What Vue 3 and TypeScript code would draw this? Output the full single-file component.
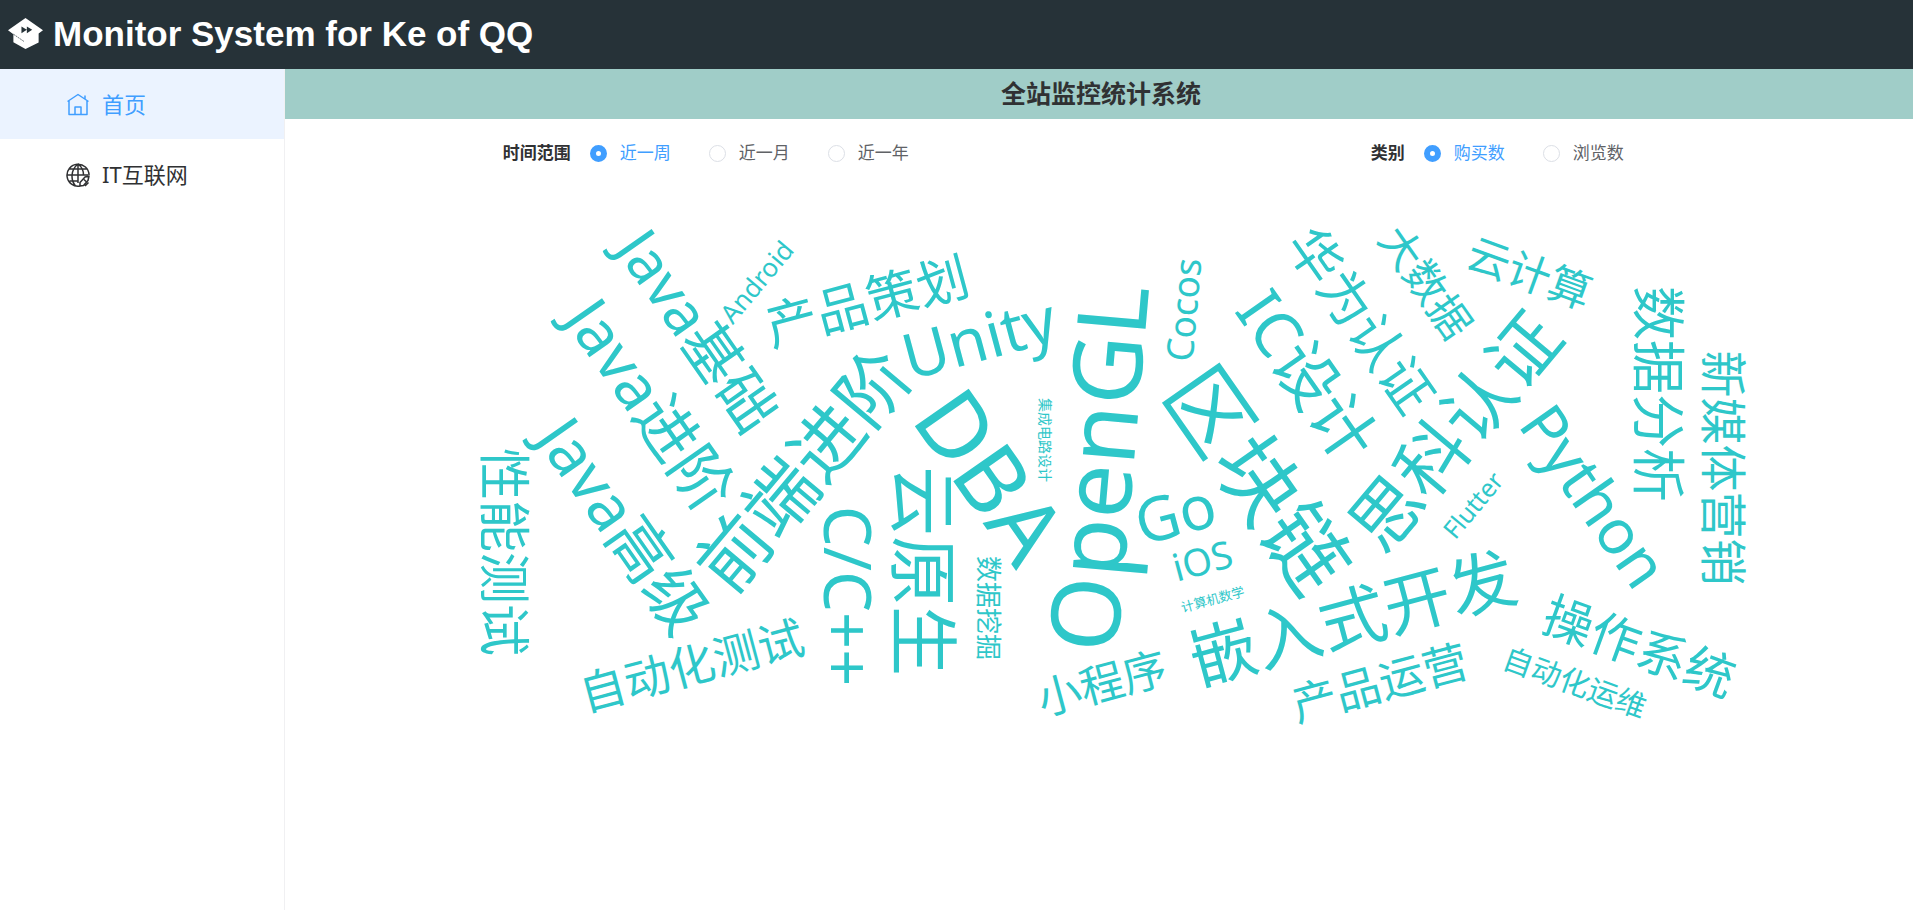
<script setup lang="ts">
import { ref } from 'vue'

interface Option {
  value: string
  label: string
}

interface Word {
  text: string
  size: number
  x: number
  y: number
  angle: number
}

const ranges: Option[] = [
  { value: 'week', label: '近一周' },
  { value: 'month', label: '近一月' },
  { value: 'year', label: '近一年' },
]

const kinds: Option[] = [
  { value: 'buy', label: '购买数' },
  { value: 'view', label: '浏览数' },
]

const range = ref('week')
const kind = ref('buy')

const words: Word[] = [
  { text: 'OpenGL', size: 96, x: 848, y: 284, angle: -85 },
  { text: 'DBA', size: 92, x: 678, y: 308, angle: 55 },
  { text: '区块链', size: 84, x: 948, y: 310, angle: 55 },
  { text: '前端进阶', size: 72, x: 539, y: 300, angle: -50 },
  { text: '思科认证', size: 71, x: 1190, y: 261, angle: -50 },
  { text: '云原生', size: 70, x: 612, y: 384, angle: 90 },
  { text: '嵌入式开发', size: 67, x: 1074, y: 455, angle: -15 },
  { text: 'C/C++', size: 65, x: 539, y: 409, angle: 90 },
  { text: 'IC设计', size: 64, x: 1003, y: 202, angle: 55 },
  { text: 'Unity', size: 63, x: 700, y: 173, angle: -15 },
  { text: 'Java高级', size: 63, x: 320, y: 352, angle: 55 },
  { text: 'Python', size: 62, x: 1291, y: 322, angle: 55 },
  { text: 'Java进阶', size: 62, x: 347, y: 231, angle: 55 },
  { text: 'Go', size: 61, x: 896, y: 348, angle: -15 },
  { text: 'Java基础', size: 59, x: 395, y: 156, angle: 55 },
  { text: '数据分析', size: 54, x: 1353, y: 207, angle: 90 },
  { text: '华为认证', size: 53, x: 1060, y: 144, angle: 55 },
  { text: '性能测试', size: 52, x: 200, y: 365, angle: 90 },
  { text: '产品策划', size: 52, x: 587, y: 133, angle: -15 },
  { text: '操作系统', size: 50, x: 1348, y: 477, angle: 20 },
  { text: '新媒体营销', size: 47, x: 1421, y: 281, angle: 90 },
  { text: '自动化测试', size: 46, x: 411, y: 495, angle: -15 },
  { text: '产品运营', size: 45, x: 1099, y: 512, angle: -15 },
  { text: '小程序', size: 44, x: 821, y: 512, angle: -15 },
  { text: '云计算', size: 43, x: 1239, y: 101, angle: 20 },
  { text: '大数据', size: 42, x: 1128, y: 104, angle: 55 },
  { text: 'iOS', size: 38, x: 921, y: 387, angle: -15 },
  { text: 'Cocos', size: 37, x: 912, y: 124, angle: -85 },
  { text: '自动化运维', size: 30, x: 1286, y: 506, angle: 20 },
  { text: 'Android', size: 26, x: 479, y: 101, angle: -50 },
  { text: '数据挖掘', size: 26, x: 694, y: 421, angle: 90 },
  { text: 'Flutter', size: 25, x: 1195, y: 324, angle: -50 },
  { text: '集成电路设计', size: 14, x: 755, y: 253, angle: 90 },
  { text: '计算机数学', size: 13, x: 929, y: 417, angle: -15 },
]
</script>

<template>
  <div class="page">
    <header class="topbar">
      <svg class="logo" viewBox="0 0 104 92" aria-hidden="true">
        <path d="M0 36 52 0l52 36-13 10v27L52 92 16 72V48Z" fill="#fff" />
        <path d="M16 48 48 70" stroke="#263238" stroke-width="2" stroke-dasharray="6 2" />
        <path d="M40 25l16 10-16 10ZM56 25l16 10-16 10Z" fill="#263238" />
      </svg>
      <h1 class="brand">Monitor System for Ke of QQ</h1>
    </header>

    <div class="body">
      <nav class="aside">
        <a class="item active" href="#home">
          <svg class="icon" viewBox="0 0 48 48" aria-hidden="true">
            <path d="M3 17 24 3l21 14M6 16v27h36V16M18 43V28h12v15M38 12V5" />
          </svg>
          <span>首页</span>
        </a>
        <a class="item" href="#it">
          <svg class="icon" viewBox="0 0 48 48" aria-hidden="true">
            <path d="M28 46A22 22 0 1 1 46 24M2 24h42M7 12h34M7 36h17M24 2v38M24 2C9 14 9 34 19 46M24 2c8 6 11 14 11 22" />
            <path d="M46 26l-8 2-10 11v7l7-1 9-10ZM36 33l4 4M38 46l7-7" />
          </svg>
          <span>IT互联网</span>
        </a>
      </nav>

      <main class="main">
        <h2 class="title">全站监控统计系统</h2>

        <form class="filters">
          <div class="group" role="radiogroup" aria-labelledby="range-label">
            <span id="range-label" class="caption">时间范围</span>
            <label v-for="o in ranges" :key="o.value" class="radio">
              <input v-model="range" type="radio" name="range" :value="o.value" />
              <span>{{ o.label }}</span>
            </label>
          </div>
          <div class="group" role="radiogroup" aria-labelledby="kind-label">
            <span id="kind-label" class="caption">类别</span>
            <label v-for="o in kinds" :key="o.value" class="radio">
              <input v-model="kind" type="radio" name="kind" :value="o.value" />
              <span>{{ o.label }}</span>
            </label>
          </div>
        </form>

        <svg class="cloud" viewBox="0 0 1628 700" role="img" aria-label="课程词云">
          <text
            v-for="w in words"
            :key="w.text"
            :font-size="w.size"
            :transform="`translate(${w.x} ${w.y}) rotate(${w.angle})`"
          >{{ w.text }}</text>
        </svg>
      </main>
    </div>
  </div>
</template>

<style>
body {
  margin: 0;
}
</style>

<style scoped>
.page {
  display: flex;
  flex-direction: column;
  min-height: 100vh;
  color: #303133;
  background: #fff;
  font-family: "Noto Sans", "Noto Sans CJK SC", sans-serif;
}

.topbar {
  display: flex;
  align-items: center;
  gap: 10px;
  height: 69px;
  padding: 0 0 2px 8px;
  box-sizing: border-box;
  background: #263238;
}

.logo {
  width: 35px;
  height: 31px;
}

.brand {
  margin: 0;
  color: #fff;
  font: bold 35px/40px "Liberation Sans", Arial, sans-serif;
}

.body {
  display: flex;
  flex: 1;
}

.aside {
  flex: none;
  width: 285px;
  box-sizing: border-box;
  border-right: 1px solid #f0f0f2;
}

.item {
  display: flex;
  align-items: center;
  gap: 12px;
  height: 70px;
  padding-left: 66px;
  color: #303133;
  font-size: 22px;
  line-height: 32px;
  text-decoration: none;
}

.item.active {
  color: #409eff;
  background: #ebf3ff;
}

.icon {
  width: 24px;
  height: 24px;
  margin-top: 2px;
  fill: none;
  stroke: currentColor;
  stroke-width: 3;
  stroke-linejoin: round;
}

.main {
  flex: 1;
  min-width: 0;
}

.title {
  margin: 0;
  padding: 0 0 2px 4px;
  font-size: 25px;
  line-height: 48px;
  text-align: center;
  background: #a0cdc8;
}

.filters {
  display: grid;
  grid-template-columns: 1fr 1fr;
  align-items: center;
  height: 68px;
  padding: 0 20px 0 25px;
}

.group {
  display: flex;
  align-items: center;
  justify-content: center;
  font-size: 17px;
  line-height: 24px;
}

.caption {
  margin-right: 19px;
  font-weight: bold;
}

.radio {
  display: flex;
  align-items: center;
  gap: 13px;
  color: #606266;
  cursor: pointer;
}

.radio + .radio {
  margin-left: 38px;
}

.radio input {
  width: 17px;
  height: 17px;
  margin: 0;
  appearance: none;
  border: 1px solid #dcdfe6;
  border-radius: 50%;
  background: #fff;
}

.radio input:checked {
  border: 6px solid #409eff;
}

.radio:has(input:checked) {
  color: #409eff;
}

.cloud {
  display: block;
  width: 100%;
}

.cloud text {
  fill: #2ec7c9;
  text-anchor: middle;
}
</style>
